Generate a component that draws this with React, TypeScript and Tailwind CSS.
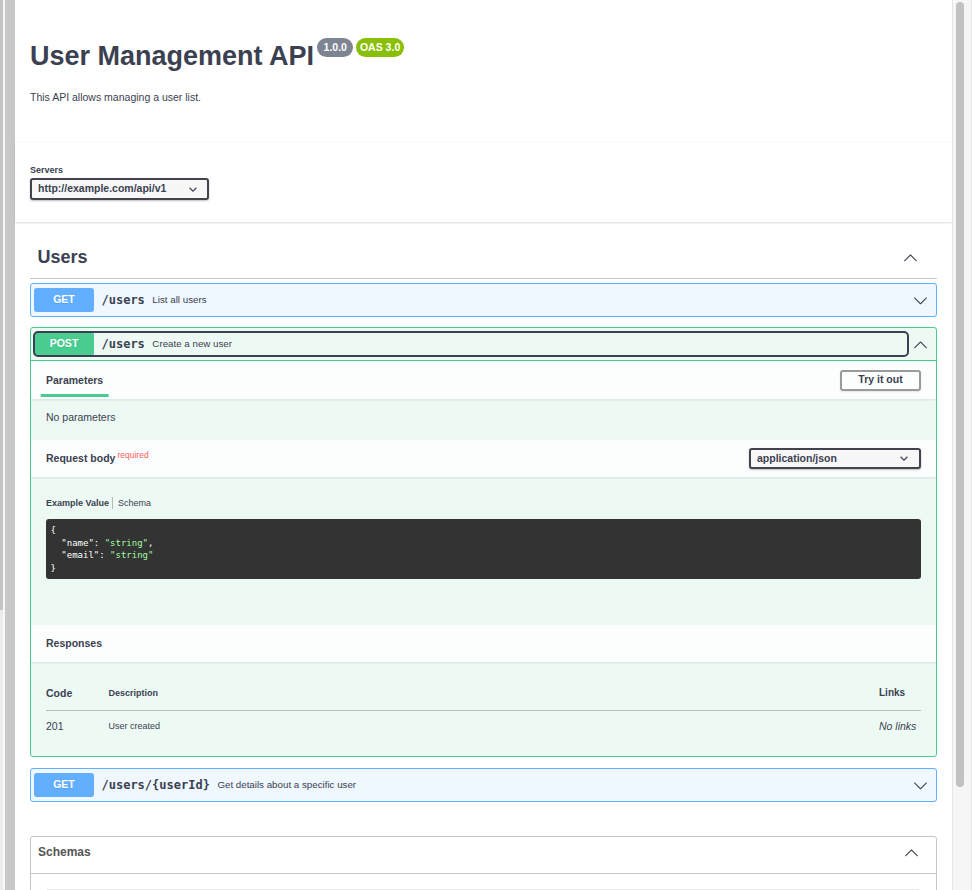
import React from "react";

function ArrowDown() {
  return (
    <svg viewBox="0 0 20 20" width="15" height="15" fill="#3b4151" aria-hidden="true">
      <path d="M17.418 6.109c.272-.268.709-.268.979 0s.271.701 0 .969l-7.908 7.83c-.27.268-.707.268-.979 0l-7.908-7.83c-.27-.268-.27-.701 0-.969.271-.268.709-.268.979 0L10 13.25l7.418-7.141z" />
    </svg>
  );
}

function ArrowUp() {
  return (
    <svg viewBox="0 0 20 20" width="15" height="15" fill="#3b4151" aria-hidden="true">
      <path d="M17.418 14.908c.272.268.709.268.979 0s.271-.701 0-.969l-7.908-7.83c-.27-.268-.707-.268-.979 0l-7.908 7.83c-.27.268-.27.701 0 .969.271.268.709.268.979 0L10 7.767l7.418 7.141z" />
    </svg>
  );
}

function SmallChevron() {
  return (
    <svg width="8" height="5" viewBox="0 0 8 5" aria-hidden="true">
      <path d="M0.6 0.8 L4 4.1 L7.4 0.8" stroke="#3b4151" strokeWidth="1.2" fill="none" />
    </svg>
  );
}

function GetSummary({ path, desc }: { path: string; desc: string }) {
  return (
    <div className="flex h-[32px] items-center">
      <div className="ml-[3px] flex h-[24px] flex-1 items-center">
        <span className="flex h-[24px] w-[60px] shrink-0 items-center justify-center rounded-[3px] bg-[#61affe] text-[10.5px] font-bold text-white [text-shadow:0_1px_0_rgba(0,0,0,0.1)]">
          GET
        </span>
        <span className="px-[7.5px] text-[12px] font-bold [font-family:'DejaVu_Sans_Mono',monospace]">{path}</span>
        <span className="text-[9.75px]">{desc}</span>
      </div>
      <div className="flex w-[28px] pl-[5px]">
        <ArrowDown />
      </div>
    </div>
  );
}

export default function App() {
  return (
    <div className="flex h-[890px] w-[972px] overflow-hidden bg-white text-[#3b4151] [font-family:'Liberation_Sans',Arial,sans-serif]">
      {/* left strip */}
      <div className="flex w-[15px] shrink-0">
        <div className="flex w-[3px] flex-col bg-[#ececec]">
          <div className="h-[610px] bg-[#c4c4c4]" />
        </div>
        <div className="w-[2px] bg-[#f7f7f7]" />
        <div className="w-[10px] bg-[#c8c8c8]" />
      </div>

      {/* main */}
      <div className="flex w-[937px] shrink-0 flex-col">
        {/* info */}
        <div className="h-[142px] shrink-0 px-[15px] pt-[40px]">
          <div className="flex items-start">
            <h2 className="text-[27px] font-bold leading-[32px]">User Management API</h2>
            <span className="ml-[3px] mt-[-2px] h-[19px] rounded-full bg-[#7d8492] px-[6.5px] text-[10.5px] font-bold leading-[19px] text-white">
              1.0.0
            </span>
            <span className="ml-[3px] mt-[-2px] h-[19px] rounded-full bg-[#89bf04] px-[3.5px] text-[10.5px] font-bold leading-[19px] text-white">
              OAS 3.0
            </span>
          </div>
          <p className="mt-[18px] text-[10.5px] leading-[15px]">This API allows managing a user list.</p>
        </div>

        {/* servers */}
        <div className="h-[80px] shrink-0 border-t border-[#f9f9f9] px-[15px] pt-[21px] shadow-[0_1px_2px_0_rgba(0,0,0,0.15)]">
          <div className="text-[9px] font-bold leading-[12px]">Servers</div>
          <div className="mt-[2px] flex h-[22px] w-[179px] items-center justify-between rounded-[3px] border-2 border-[#41444e] bg-[#f7f7f7] pl-[6px] pr-[10px] shadow-[0_1px_2px_0_rgba(0,0,0,0.25)]">
            <span className="text-[10.5px] font-bold">http://example.com/api/v1</span>
            <SmallChevron />
          </div>
        </div>

        {/* Users tag */}
        <div className="mt-[15px] px-[15px]">
          <div className="flex h-[42px] items-center justify-between border-b border-[#c4c6cb] pl-[7.5px] pr-[19px]">
            <span className="text-[18px] font-bold">Users</span>
            <ArrowUp />
          </div>

          <div className="mt-[4px] flex flex-col">
            {/* GET /users */}
            <div className="rounded-[3px] border border-[#61affe] bg-[#eff7ff]">
              <GetSummary path="/users" desc="List all users" />
            </div>

            {/* POST /users */}
            <div className="mt-[10px] rounded-[3px] border border-[#49cc90] bg-[#edfaf4]">
              <div className="flex h-[32px] items-center">
                <div className="ml-[3px] flex h-[24px] flex-1 items-center rounded-[4px] outline-2 outline-offset-[-1px] outline-solid outline-[#3b4151]">
                  <span className="flex h-[24px] w-[60px] shrink-0 items-center justify-center rounded-[3px] bg-[#49cc90] text-[10.5px] font-bold text-white [text-shadow:0_1px_0_rgba(0,0,0,0.1)]">
                    POST
                  </span>
                  <span className="px-[7.5px] text-[12px] font-bold [font-family:'DejaVu_Sans_Mono',monospace]">/users</span>
                  <span className="text-[9.75px]">Create a new user</span>
                </div>
                <div className="flex w-[28px] pl-[5px]">
                  <ArrowUp />
                </div>
              </div>

              <div className="border-t border-[#49cc90]">
                {/* parameters header */}
                <div className="flex h-[38px] items-center justify-between bg-white/80 px-[15px] shadow-[0_1px_2px_rgba(0,0,0,0.1)]">
                  <div className="relative text-[10.5px] font-bold leading-[15px]">
                    Parameters
                    <span className="absolute bottom-[-9px] left-1/2 h-[3px] w-[120%] -translate-x-1/2 bg-[#49cc90]" />
                  </div>
                  <button className="flex h-[21px] w-[81px] items-center justify-center rounded-[3px] border-2 border-[#9a9a9a] bg-transparent text-[10.5px] font-bold text-[#3b4151] shadow-[0_1px_2px_rgba(0,0,0,0.1)]">
                    Try it out
                  </button>
                </div>

                <div className="pb-[15px] pl-[15px] pt-[11px] text-[10.5px] leading-[15px]">No parameters</div>

                {/* request body header */}
                <div className="flex h-[37px] items-center justify-between bg-white/80 px-[15px] shadow-[0_1px_2px_rgba(0,0,0,0.1)]">
                  <div className="flex items-start">
                    <span className="text-[10.5px] font-bold leading-[15px]">Request body</span>
                    <span className="ml-[2px] mt-[-1px] text-[8.5px] leading-[10px] text-[#ff5c5c]">required</span>
                  </div>
                  <div className="flex h-[21px] w-[172px] items-center justify-between rounded-[3px] border-2 border-[#41444e] bg-[#f7f7f7] pl-[6px] pr-[11px] shadow-[0_1px_2px_0_rgba(0,0,0,0.25)]">
                    <span className="text-[10.5px] font-bold">application/json</span>
                    <SmallChevron />
                  </div>
                </div>

                {/* request content */}
                <div className="px-[15px] pb-[46px] pt-[20px]">
                  <div className="flex h-[12px] items-center text-[9px] leading-[12px]">
                    <span className="font-bold">Example Value</span>
                    <span className="ml-[3px] mr-[5px] h-[12px] w-px bg-[#b5b8bd]" />
                    <span>Schema</span>
                  </div>
                  <div className="mt-[10px] rounded-[3px] bg-[#333333] px-[4.5px] py-[5px] text-[9px] leading-[12.5px] text-white [font-family:'DejaVu_Sans_Mono',monospace]">
                    <div>{"{"}</div>
                    <div className="whitespace-pre">
                      {"  \"name\": "}
                      <span className="text-[#a2fca2]">"string"</span>,
                    </div>
                    <div className="whitespace-pre">
                      {"  \"email\": "}
                      <span className="text-[#a2fca2]">"string"</span>
                    </div>
                    <div>{"}"}</div>
                  </div>
                </div>

                {/* responses header */}
                <div className="flex h-[37px] items-center bg-white/80 px-[15px] shadow-[0_1px_2px_rgba(0,0,0,0.1)]">
                  <h4 className="text-[10.5px] font-bold leading-[15px]">Responses</h4>
                </div>

                {/* responses table */}
                <div className="px-[15px] pb-[22px]">
                  <div className="grid grid-cols-[62.5px_1fr_42px] items-center border-b border-[#b9bebd] pb-[8px] pt-[22px] leading-[18px]">
                    <span className="text-[10.5px] font-bold">Code</span>
                    <span className="text-[9px] font-bold">Description</span>
                    <span className="text-[10px] font-bold">Links</span>
                  </div>
                  <div className="grid grid-cols-[62.5px_1fr_42px] items-center pt-[8px] leading-[15px]">
                    <span className="text-[10.5px]">201</span>
                    <span className="text-[9px]">User created</span>
                    <span className="text-[10.5px] italic">No links</span>
                  </div>
                </div>
              </div>
            </div>

            {/* GET /users/{userId} */}
            <div className="mt-[11px] rounded-[3px] border border-[#61affe] bg-[#eff7ff]">
              <GetSummary path="/users/{userId}" desc="Get details about a specific user" />
            </div>
          </div>

          {/* Schemas */}
          <div className="mt-[34px] rounded-[3px] border border-[#c4c6cb]">
            <div className="flex h-[37px] items-center justify-between border-b border-[#c4c6cb] pb-[6px] pl-[7px] pr-[17px]">
              <span className="text-[12px] font-bold text-[#555555]">Schemas</span>
              <ArrowUp />
            </div>
            <div className="px-[15px] pt-[15px]">
              <div className="h-[40px] rounded-[3px] border-t border-[#e8e8e8] bg-[#f7f7f7]" />
            </div>
          </div>
        </div>
      </div>

      {/* right scrollbar */}
      <div className="flex w-[20px] shrink-0 border-l border-r border-[#e6e6e6] bg-[#f6f6f6] pl-[3px] pt-[2px]">
        <div className="h-[785px] w-[8px] rounded-full bg-[#c1c1c1]" />
      </div>
    </div>
  );
}
